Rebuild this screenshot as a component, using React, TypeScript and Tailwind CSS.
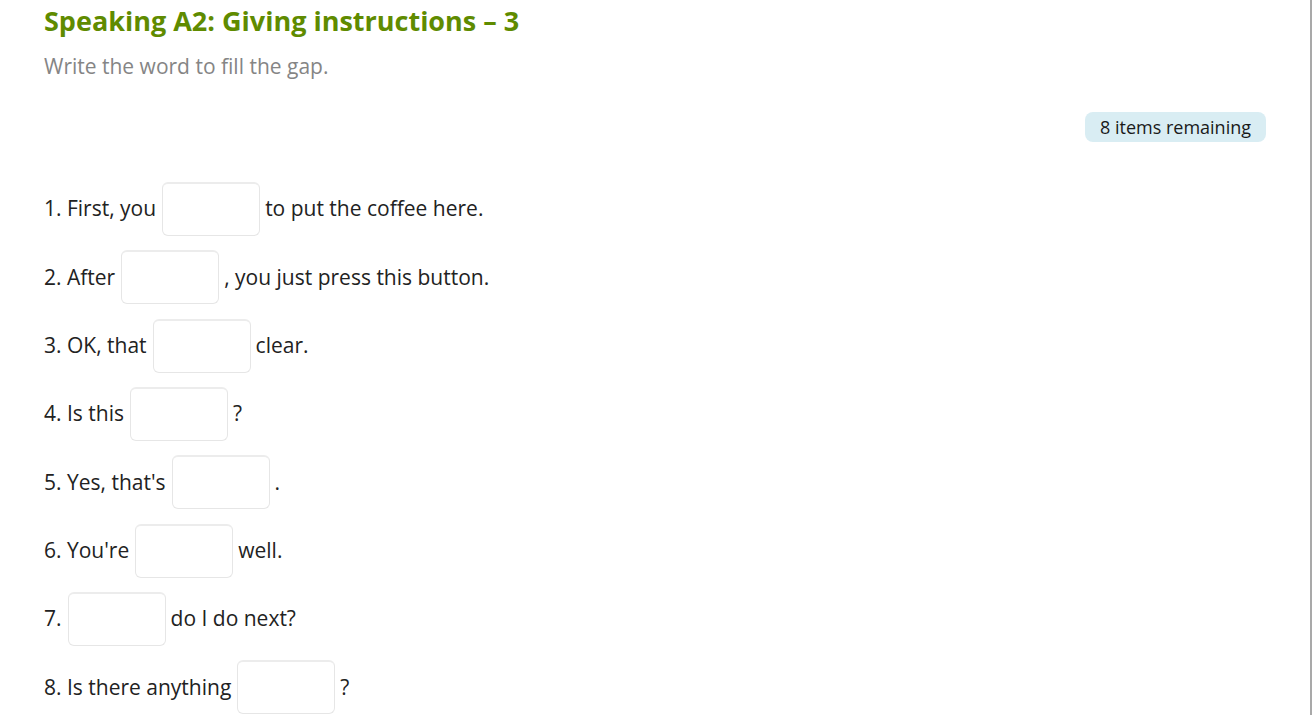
const ITEMS: [string, string][] = [
  ["1. First, you", "to put the coffee here."],
  ["2. After", ", you just press this button."],
  ["3. OK, that", "clear."],
  ["4. Is this", "?"],
  ["5. Yes, that's", "."],
  ["6. You're", "well."],
  ["7.", "do I do next?"],
  ["8. Is there anything", "?"],
];

function Gap() {
  return (
    <input
      type="text"
      className="ml-[6px] mr-[5px] h-[54px] w-[98px] rounded-[6px] border border-[#e6e6e6] border-t-2 border-t-[#ececec] bg-white px-2 text-[20px] outline-none"
    />
  );
}

export default function App() {
  return (
    <div
      className="h-[715px] overflow-hidden border-r-2 border-[#a9a9a9] bg-white pl-[44px] pr-[44px] text-[#222]"
      style={{ fontFamily: '"Open Sans", "Noto Sans", sans-serif' }}
    >
      <h1 className="pt-[2px] text-[27px] font-bold leading-[38px] text-[#5f8b00]">
        Speaking A2: Giving instructions – 3
      </h1>
      <p className="mt-[11px] text-[21px] leading-[30px] text-[#858585]">Write the word to fill the gap.</p>

      <div className="mt-[31px] flex justify-end">
        <span className="rounded-[8px] bg-[#d9edf3] px-[15px] text-[18px] leading-[30px] text-[#1a1a1a]">
          8 items remaining
        </span>
      </div>

      <div className="mt-[40px] flex flex-col gap-[14.35px] text-[21px]">
        {ITEMS.map(([a, b]) => (
          <div key={a} className="flex items-center">
            <span>{a}</span>
            <Gap />
            <span>{b}</span>
          </div>
        ))}
      </div>
    </div>
  );
}
